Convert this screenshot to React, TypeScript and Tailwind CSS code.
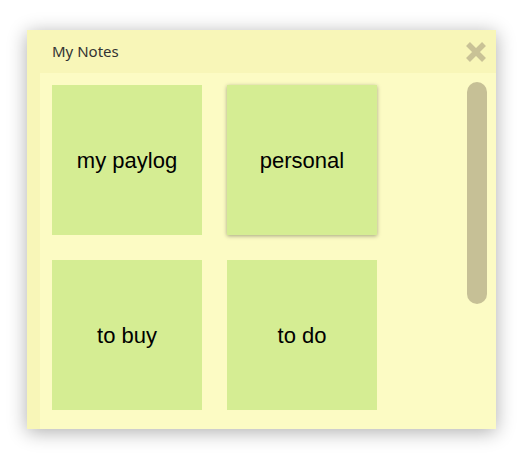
const notes = ["my paylog", "personal", "to buy", "to do"];

function CloseIcon() {
  return (
    <svg width="22" height="22" viewBox="0 0 22 22" className="block">
      <path d="M3 3 L19 19 M19 3 L3 19" stroke="#c9c296" strokeWidth="5.5" strokeLinecap="butt" />
    </svg>
  );
}

export default function App() {
  return (
    <div className="min-h-screen bg-white pt-[30px] pl-[27px]">
      <div className="flex h-[399px] w-[469px] flex-col bg-[#f8f6b8] shadow-[0_3px_18px_rgba(0,0,0,0.32)]">
        <div className="flex h-[43px] items-center justify-between pl-[25px] pr-[9px]">
          <span className="text-[15px] text-[#333] [font-family:Lato,'Liberation Sans',sans-serif]">My Notes</span>
          <button className="mt-[1px]">
            <CloseIcon />
          </button>
        </div>
        <div className="ml-[13px] flex flex-1 justify-between bg-[#fcfbc4] pl-[12px] pr-[9px] pt-[12px]">
          <div className="grid grid-cols-[150px_150px] gap-[25px] self-start">
            {notes.map((n, i) => (
              <div
                key={n}
                className={`flex h-[150px] w-[150px] items-center justify-center bg-[#d5ed93] text-[22px] text-black [font-family:'Liberation_Sans',Arial,sans-serif] ${i === 1 ? "shadow-[0_1px_4px_rgba(0,0,0,0.35)]" : ""}`}
              >
                {n}
              </div>
            ))}
          </div>
          <div className="mt-[-3px] h-[222px] w-[20px] rounded-full bg-[#c6c096]" />
        </div>
      </div>
    </div>
  );
}
